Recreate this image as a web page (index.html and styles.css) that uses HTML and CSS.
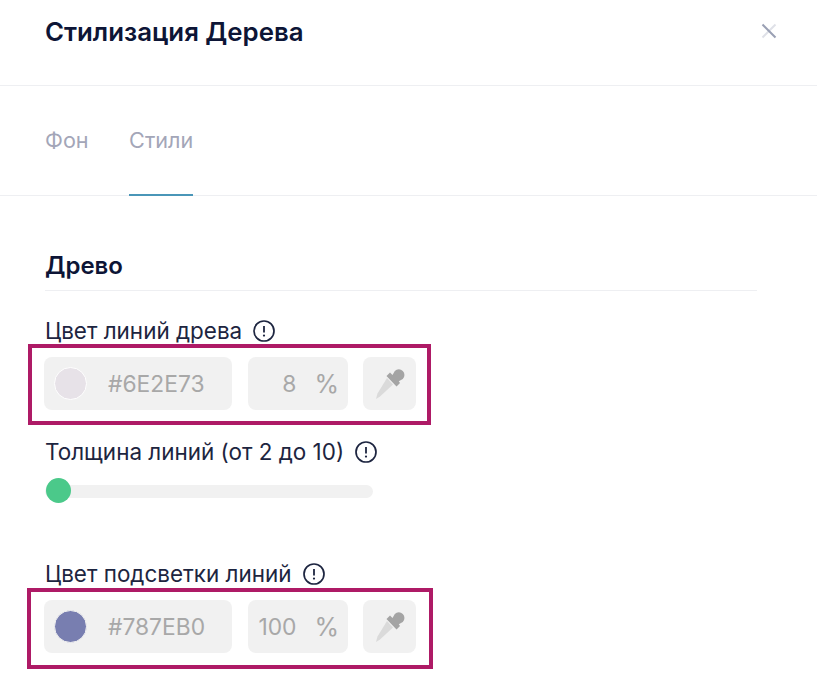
FILE: index.html
```html
<!DOCTYPE html>
<html lang="ru">
<head>
<meta charset="utf-8">
<title>Стилизация Дерева</title>
<link rel="stylesheet" href="styles.css">
</head>
<body>
<div class="panel">
  <header class="head">
    <h1 class="title">Стилизация Дерева</h1>
    <svg class="close" viewBox="0 0 16 16" width="16" height="16"><path d="M14.500 1.500 1.500 14.500" stroke="#dfe1e8" stroke-width="2"/><path d="M1.500 1.500 14.500 14.500" stroke="#9aa0b4" stroke-width="2"/></svg>
  </header>
  <nav class="tabs">
    <span class="tab">Фон</span>
    <span class="tab active">Стили</span>
  </nav>
  <main class="content">
    <h2 class="section">Древо</h2>

    <div class="label label-first">Цвет линий древа
      <svg class="info" viewBox="0 0 24 24" width="24" height="24"><circle cx="12" cy="12" r="10" fill="none" stroke="#1d2540" stroke-width="1.700"/><path d="M12 7v6.500" stroke="#1d2540" stroke-width="1.800"/><circle cx="12" cy="16.600" r="1.100" fill="#1d2540"/></svg>
    </div>
    <div class="row">
      <div class="mark mark-a"></div>
      <div class="field color"><span class="swatch swatch-a"></span><span class="hex">#6E2E73</span></div>
      <div class="field alpha"><span class="num">8</span><span class="pct">%</span></div>
      <div class="field pick">
        <svg viewBox="1 0 40 40" width="40" height="40"><path d="M18 14 24 20.500 11 32.500 7 35 8.500 29.500Z" fill="#dadada"/><path d="M17.500 12 21 8.500 23.500 11 25.800 7a5.600 5.600 0 0 1 8 8l-4 2.300 1.200 1.700L27.500 22.500Z" fill="#a4a4a4"/></svg>
      </div>
    </div>

    <div class="label label-second">Толщина линий (от 2 до 10)
      <svg class="info" viewBox="0 0 24 24" width="24" height="24"><circle cx="12" cy="12" r="10" fill="none" stroke="#1d2540" stroke-width="1.700"/><path d="M12 7v6.500" stroke="#1d2540" stroke-width="1.800"/><circle cx="12" cy="16.600" r="1.100" fill="#1d2540"/></svg>
    </div>
    <div class="slider"><span class="thumb"></span></div>

    <div class="label label-third">Цвет подсветки линий
      <svg class="info" viewBox="0 0 24 24" width="24" height="24"><circle cx="12" cy="12" r="10" fill="none" stroke="#1d2540" stroke-width="1.700"/><path d="M12 7v6.500" stroke="#1d2540" stroke-width="1.800"/><circle cx="12" cy="16.600" r="1.100" fill="#1d2540"/></svg>
    </div>
    <div class="row">
      <div class="mark mark-b"></div>
      <div class="field color"><span class="swatch swatch-b"></span><span class="hex">#787EB0</span></div>
      <div class="field alpha"><span class="num">100</span><span class="pct">%</span></div>
      <div class="field pick">
        <svg viewBox="1 0 40 40" width="40" height="40"><path d="M18 14 24 20.500 11 32.500 7 35 8.500 29.500Z" fill="#dadada"/><path d="M17.500 12 21 8.500 23.500 11 25.800 7a5.600 5.600 0 0 1 8 8l-4 2.300 1.200 1.700L27.500 22.500Z" fill="#a4a4a4"/></svg>
      </div>
    </div>
  </main>
</div>
</body>
</html>
```
FILE: styles.css
```css
* { box-sizing: border-box; }
html, body { margin: 0; padding: 0; background: #fff; }
body { font-family: Inter, "Noto Sans", sans-serif; height: 679px; overflow: hidden; }
.panel { width: 817px; }
.head {
  height: 86px;
  border-bottom: 1px solid #eeeff2;
  padding: 17px 40px 0 45px;
  display: flex;
  justify-content: space-between;
  align-items: flex-start;
}
.title { margin: 0; font-size: 25.8px; line-height: 29px; font-weight: 600; color: #0d1536; }
.close { margin-top: 6px; }
.tabs {
  height: 110px;
  border-bottom: 1px solid #eeeff2;
  padding: 0 0 0 45px;
  display: flex;
  gap: 40.5px;
}
.tab {
  font-size: 21.6px;
  line-height: 24px;
  color: #a3a6b8;
  padding-top: 42px;
  height: 110px;
}
.tab.active { border-bottom: 2px solid #4a96b8; }
.content { padding: 55px 60px 0 45px; }
.section {
  margin: 0;
  font-size: 24px;
  line-height: 29px;
  font-weight: 600;
  color: #0d1536;
  height: 40px;
  border-bottom: 1px solid #eeeff2;
}
.label {
  display: flex;
  align-items: center;
  gap: 10px;
  font-size: 22.45px;
  line-height: 24px;
  color: #1d2540;
}
.label-first { margin-top: 28px; }
.label-second { margin-top: 30px; }
.label-third { margin-top: 64px; }
.row {
  position: relative;
  margin-top: 14px;
  margin-left: -1px;
  display: flex;
  height: 53px;
}
.mark { position: absolute; border: 4px solid #ae1a66; pointer-events: none; }
.mark-a { left: -16px; top: -13px; width: 403px; height: 81px; }
.mark-b { left: -17px; top: -12px; width: 406px; height: 81px; }
.field {
  background: #f1f1f1;
  border-radius: 8px;
  display: flex;
  align-items: center;
  font-size: 22.8px;
  color: #a8a8a8;
}
.color { width: 188px; padding-left: 10px; gap: 21px; }
.swatch { width: 33px; height: 33px; border-radius: 50%; border: 1px solid #fff; flex: none; }
.swatch-a { background: #e7e2e8; }
.swatch-b { background: #787eb0; border-color: #f1f1f1; }
.alpha { width: 100px; margin-left: 16px; padding-right: 9px; justify-content: flex-end; }
.num { margin-right: 18px; }
.pct { font-size: 25px; }
.pick { width: 53px; margin-left: 15px; justify-content: center; }
.slider {
  position: relative;
  width: 328px;
  height: 13px;
  margin-top: 21px;
  background: #f1f1f1;
  border-radius: 7px;
}
.thumb {
  position: absolute;
  left: 1px;
  top: -7px;
  width: 25px;
  height: 25px;
  border-radius: 50%;
  background: #4bc98a;
}
```
